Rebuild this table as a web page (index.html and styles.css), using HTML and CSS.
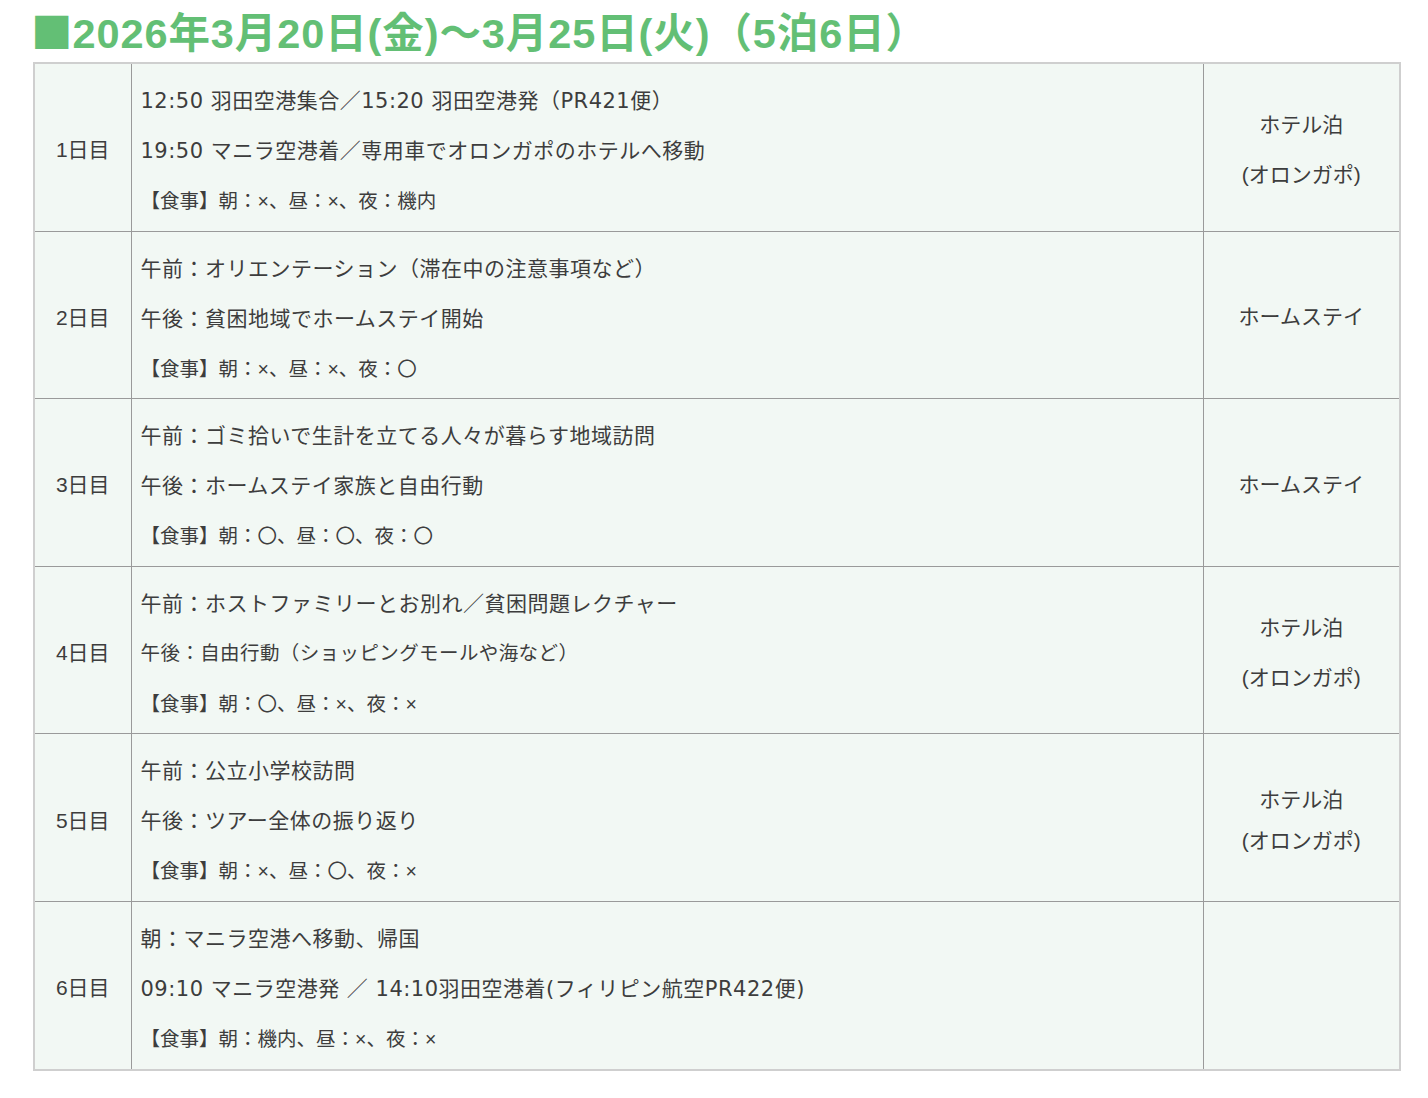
FILE: index.html
```html
<!DOCTYPE html>
<html lang="ja">
<head>
<meta charset="utf-8">
<link rel="stylesheet" href="styles.css">
</head>
<body>
<div class="page">
  <h2 class="title"><span class="sq">■</span>2026年3月20日(金)〜3月25日(火)（5泊6日）</h2>
  <table class="sched">
    <colgroup>
      <col class="c-day">
      <col class="c-main">
      <col class="c-stay">
    </colgroup>
    <tbody>
      <tr>
        <td class="day">1日目</td>
        <td class="main">
          <p>12:50 羽田空港集合／15:20 羽田空港発（PR421便）</p>
          <p>19:50 マニラ空港着／専用車でオロンガポのホテルへ移動</p>
          <p class="meal">【食事】朝：×、昼：×、夜：機内</p>
        </td>
        <td class="stay"><p>ホテル泊</p><p>(オロンガポ)</p></td>
      </tr>
      <tr>
        <td class="day">2日目</td>
        <td class="main">
          <p>午前：オリエンテーション（滞在中の注意事項など）</p>
          <p>午後：貧困地域でホームステイ開始</p>
          <p class="meal">【食事】朝：×、昼：×、夜：〇</p>
        </td>
        <td class="stay"><p>ホームステイ</p></td>
      </tr>
      <tr>
        <td class="day">3日目</td>
        <td class="main">
          <p>午前：ゴミ拾いで生計を立てる人々が暮らす地域訪問</p>
          <p>午後：ホームステイ家族と自由行動</p>
          <p class="meal">【食事】朝：〇、昼：〇、夜：〇</p>
        </td>
        <td class="stay"><p>ホームステイ</p></td>
      </tr>
      <tr>
        <td class="day">4日目</td>
        <td class="main">
          <p>午前：ホストファミリーとお別れ／貧困問題レクチャー</p>
          <p class="small">午後：自由行動（ショッピングモールや海など）</p>
          <p class="meal">【食事】朝：〇、昼：×、夜：×</p>
        </td>
        <td class="stay"><p>ホテル泊</p><p>(オロンガポ)</p></td>
      </tr>
      <tr>
        <td class="day">5日目</td>
        <td class="main">
          <p>午前：公立小学校訪問</p>
          <p>午後：ツアー全体の振り返り</p>
          <p class="meal">【食事】朝：×、昼：〇、夜：×</p>
        </td>
        <td class="stay"><p class="tight">ホテル泊<br>(オロンガポ)</p></td>
      </tr>
      <tr>
        <td class="day">6日目</td>
        <td class="main">
          <p>朝：マニラ空港へ移動、帰国</p>
          <p>09:10 マニラ空港発 ／ 14:10羽田空港着(フィリピン航空PR422便)</p>
          <p class="meal">【食事】朝：機内、昼：×、夜：×</p>
        </td>
        <td class="stay"></td>
      </tr>
    </tbody>
  </table>
</div>
</body>
</html>
```

FILE: styles.css
```css
html, body {
  margin: 0;
  padding: 0;
  background: #ffffff;
}

body {
  font-family: "Liberation Sans", "Noto Sans CJK JP", sans-serif;
  color: #3d3d3d;
}

.page {
  padding: 10px 29px 0 33px;
}

.title {
  margin: 0 0 4px -2px;
  height: 48px;
  font-size: 41.5px;
  line-height: 48px;
  font-weight: 700;
  color: #63bf75;
  white-space: nowrap;
  letter-spacing: 0.9px;
}

.title .sq {
  font-family: "Noto Sans CJK JP", sans-serif;
  letter-spacing: 0;
  line-height: 0;
}

.sched {
  width: 1366px;
  border-collapse: collapse;
  border: 2px solid #cfcfcf;
  background: #f2f8f4;
  table-layout: fixed;
}

.c-day { width: 97px; }
.c-main { width: 1072px; }
.c-stay { width: 197px; }

.sched td {
  border: 1px solid #9a9a9a;
  vertical-align: middle;
  font-size: 21px;
}

.sched tr:first-child td { border-top: 2px solid #cfcfcf; }
.sched tr:last-child td { border-bottom: 2px solid #cfcfcf; }
.sched td:first-child { border-left: 2px solid #cfcfcf; }
.sched td:last-child { border-right: 2px solid #cfcfcf; }

.day {
  text-align: center;
  font-size: 20px;
  padding-top: 3px;
}

.main {
  padding: 22px 10px 14.6px 9px;
  font-family: "DejaVu Sans", "Noto Sans CJK JP", sans-serif;
  font-size: 20px;
  letter-spacing: 0.5px;
}

.main p,
.stay p {
  margin: 0 0 20px;
  line-height: 30px;
  white-space: nowrap;
}

.main p {
  font-size: 21px;
}

.main p:last-child,
.stay p:last-child {
  margin-bottom: 0;
}

.main .small {
  font-size: 19.5px;
  letter-spacing: 0.4px;
}

.main .meal {
  font-family: "Liberation Sans", "Noto Sans CJK JP", sans-serif;
  font-size: 19.5px;
  letter-spacing: 0;
}

.stay {
  text-align: center;
  padding: 5px 6px 0;
}

.stay .tight {
  line-height: 41px;
}
```
